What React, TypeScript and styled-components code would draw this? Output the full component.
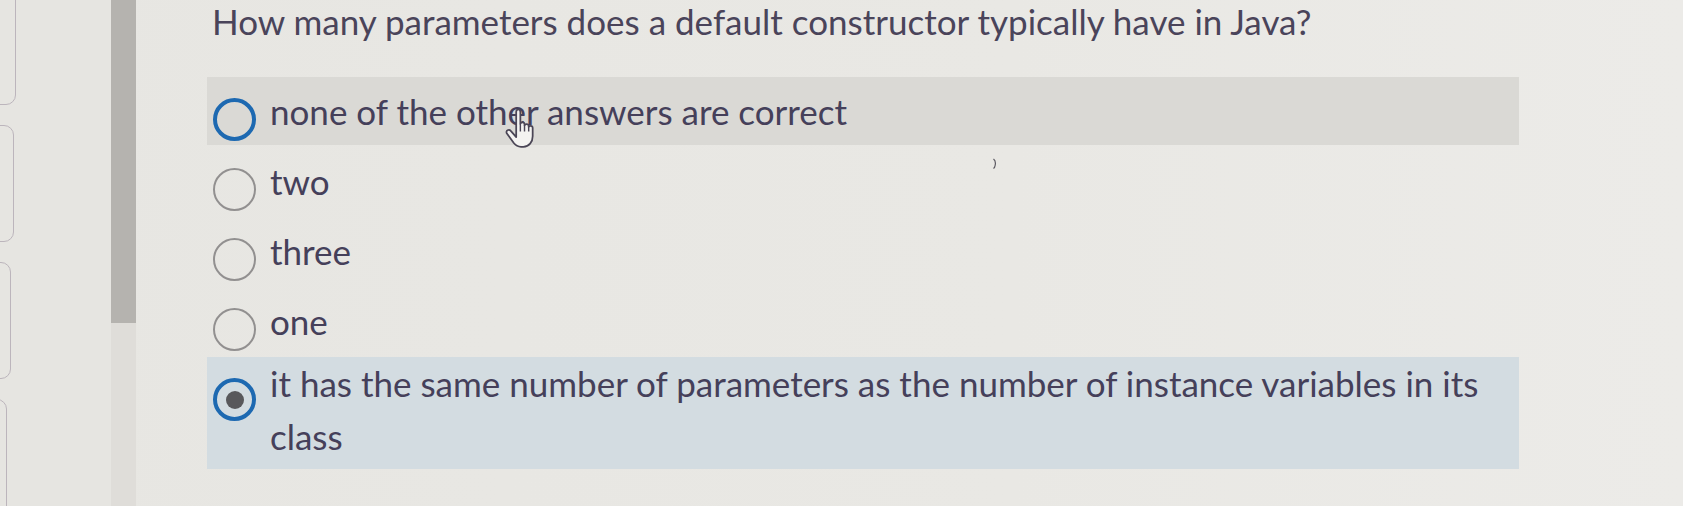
import React from "react";
import styled, { createGlobalStyle, css } from "styled-components";

const GlobalStyle = createGlobalStyle`
  html, body {
    margin: 0;
    padding: 0;
    background: #e8e7e3;
    font-family: Lato, "Open Sans", "Noto Sans", sans-serif;
  }
  #root { height: 506px; }
`;

const Page = styled.div`
  display: flex;
  height: 506px;
  overflow: hidden;
  background: linear-gradient(90deg, #e7e6e2 0%, #e9e8e4 60%, #ecebe8 100%);
`;

const NavColumn = styled.nav`
  width: 111px;
  flex-shrink: 0;
  display: flex;
  flex-direction: column;
  gap: 20px;
  margin-top: -12px;
  background: #e6e5e1;
`;

const NavCard = styled.div<{ $edge: number }>`
  width: 40px;
  height: 117px;
  flex-shrink: 0;
  margin-left: ${(p) => p.$edge - 40}px;
  border: 1.5px solid #bcb5bc;
  border-radius: 10px;
  box-sizing: border-box;
`;

const ScrollColumn = styled.div`
  width: 25px;
  flex-shrink: 0;
  display: flex;
  flex-direction: column;
`;

const ScrollThumb = styled.div`
  height: 323px;
  background: #b5b3af;
`;

const ScrollTrack = styled.div`
  flex: 1;
  background: #dfddd9;
`;

const Main = styled.main`
  position: relative;
  flex: 1;
  padding-left: 76px;
  color: #46415a;
`;

const Question = styled.h1`
  margin: 0;
  font-size: 35px;
  line-height: 42px;
  font-weight: 400;
  color: #4a445a;
  white-space: nowrap;
`;

const OptionList = styled.div`
  display: flex;
  flex-direction: column;
  gap: 2px;
  width: 1312px;
  margin-top: 35px;
  margin-left: -5px;
`;

type RowState = "hover" | "plain" | "selected";

const OptionRow = styled.label<{ $state: RowState }>`
  position: relative;
  display: flex;
  align-items: flex-start;
  min-height: 68px;
  padding: 0 0 0 6px;
  box-sizing: border-box;
  background: ${(p) =>
    p.$state === "hover" ? "#dad9d5" : p.$state === "selected" ? "#d3dce1" : "transparent"};
`;

const Radio = styled.span<{ $state: RowState }>`
  position: relative;
  width: 43px;
  height: 43px;
  margin-top: 21px;
  flex-shrink: 0;
  border-radius: 50%;
  box-sizing: border-box;
  ${(p) =>
    p.$state === "plain"
      ? css`
          border: 2px solid #929090;
        `
      : css`
          border: 4px solid #1d69b1;
        `}
`;

const RadioDot = styled.span`
  position: absolute;
  left: 50%;
  top: 50%;
  width: 18px;
  height: 18px;
  margin: -9px 0 0 -9px;
  border-radius: 50%;
  background: #58585b;
`;

const OptionText = styled.span<{ $multi?: boolean }>`
  margin-left: 14px;
  padding-top: ${(p) => (p.$multi ? "0" : "8px")};
  padding-bottom: ${(p) => (p.$multi ? "6px" : "7px")};
  font-size: 35px;
  line-height: 53px;
  color: #45405a;
`;

const Cursor = styled.svg`
  position: absolute;
  left: 298px;
  top: 32px;
  width: 32px;
  height: 40px;
`;

const Speck = styled.svg`
  position: absolute;
  left: 856px;
  top: 158px;
  width: 5px;
  height: 12px;
`;

const HandCursor = () => (
  <Cursor viewBox="0 0 20 25" aria-hidden>
    <path
      d="M7 1.8C7 0.9 7.6 0.3 8.3 0.3C9 0.3 9.6 0.9 9.6 1.8V9.2C9.8 8.6 10.3 8.3 10.9 8.3C11.6 8.3 12.2 8.8 12.2 9.5V10.2C12.4 9.7 12.9 9.4 13.5 9.4C14.2 9.4 14.8 9.9 14.8 10.6V11.2C15 10.8 15.4 10.5 16 10.5C16.7 10.5 17.3 11.1 17.3 11.8V17C17.3 20.6 15 23.6 11.5 23.6H10C8 23.6 6.6 22.7 5.5 21.3L1.2 15.3C0.7 14.6 0.9 13.7 1.6 13.3C2.3 12.9 3.1 13.1 3.6 13.7L7 17.6Z"
      fill="#f4f3f1"
      stroke="#4b4656"
      strokeWidth="1.1"
      strokeLinejoin="round"
    />
    <path d="M9.6 9.2V14M12.2 10.2V14M14.8 11.2V14" stroke="#4b4656" strokeWidth="0.9" fill="none" />
  </Cursor>
);

const options: { text: string; state: RowState; multi?: boolean }[] = [
  { text: "none of the other answers are correct", state: "hover" },
  { text: "two", state: "plain" },
  { text: "three", state: "plain" },
  { text: "one", state: "plain" },
  {
    text: "it has the same number of parameters as the number of instance variables in its class",
    state: "selected",
    multi: true,
  },
];

export default function App() {
  return (
    <>
      <GlobalStyle />
      <Page>
        <NavColumn>
          <NavCard $edge={16} />
          <NavCard $edge={14} />
          <NavCard $edge={11} />
          <NavCard $edge={7} />
        </NavColumn>
        <ScrollColumn>
          <ScrollThumb />
          <ScrollTrack />
        </ScrollColumn>
        <Main>
          <Question>How many parameters does a default constructor typically have in Java?</Question>
          <OptionList>
            {options.map((o, i) => (
              <OptionRow key={i} $state={o.state}>
                <Radio $state={o.state}>{o.state === "selected" && <RadioDot />}</Radio>
                <OptionText $multi={o.multi}>{o.text}</OptionText>
                {o.state === "hover" && <HandCursor />}
              </OptionRow>
            ))}
          </OptionList>
          <Speck viewBox="0 0 5 12" aria-hidden>
            <path d="M1.5 1C3.5 2.5 3.8 6 2.5 9.5L1.5 10.5" stroke="#5a5860" strokeWidth="1.2" fill="none" />
          </Speck>
        </Main>
      </Page>
    </>
  );
}
